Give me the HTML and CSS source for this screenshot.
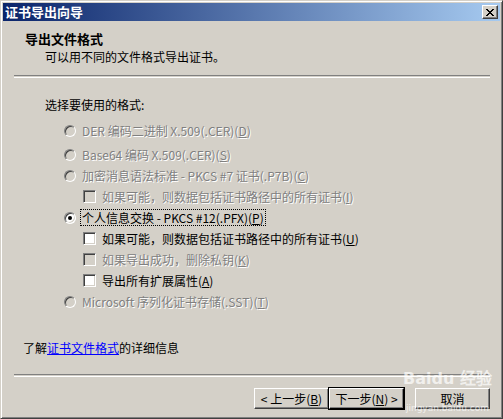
FILE: index.html
```html
<!DOCTYPE html>
<html lang="zh-CN">
<head>
  <meta charset="UTF-8">
  <title>证书导出向导</title>
  <link rel="stylesheet" href="styles.css">
</head>
<body>
  <div class="window">
    <div class="titlebar">
      <span class="title">证书导出向导</span>
      <span class="close">
        <svg width="8" height="7" viewBox="0 0 8 7">
          <path d="M0 0h2v1h1v1h2v-1h1v-1h2v1h-1v1h-1v1h-1v1h1v1h1v1h1v1h-2v-1h-1v-1h-2v1h-1v1h-2v-1h1v-1h1v-1h1v-1h-1v-1h-1v-1h-1z" fill="#000"/>
        </svg>
      </span>
    </div>

    <div class="header">
      <div class="header-title">导出文件格式</div>
      <div class="header-sub">可以用不同的文件格式导出证书。</div>
    </div>
    <div class="sep"></div>

    <div class="prompt">选择要使用的格式:</div>
    <ul class="options">
      <li class="opt first disabled"><span class="radio"></span><span class="label">DER 编码二进制 X.509(.CER)(<u>D</u>)</span></li>
      <li class="opt disabled"><span class="radio"></span><span class="label">Base64 编码 X.509(.CER)(<u>S</u>)</span></li>
      <li class="opt disabled"><span class="radio"></span><span class="label">加密消息语法标准 - PKCS #7 证书(.P7B)(<u>C</u>)</span></li>
      <li class="opt sub disabled"><span class="check"></span><span class="label">如果可能，则数据包括证书路径中的所有证书(<u>I</u>)</span></li>
      <li class="opt"><span class="radio checked"></span><span class="label focus">个人信息交换 - PKCS #12(.PFX)(<u>P</u>)</span></li>
      <li class="opt sub"><span class="check"></span><span class="label">如果可能，则数据包括证书路径中的所有证书(<u>U</u>)</span></li>
      <li class="opt sub disabled"><span class="check"></span><span class="label">如果导出成功，删除私钥(<u>K</u>)</span></li>
      <li class="opt sub"><span class="check"></span><span class="label">导出所有扩展属性(<u>A</u>)</span></li>
      <li class="opt disabled"><span class="radio"></span><span class="label">Microsoft 序列化证书存储(.SST)(<u>T</u>)</span></li>
    </ul>

    <div class="more">了解<a href="#">证书文件格式</a>的详细信息</div>
    <div class="sep bottom"></div>

    <div class="buttons">
      <span class="btn">&lt; 上一步(<u>B</u>)</span>
      <span class="btn default">下一步(<u>N</u>) &gt;</span>
      <span class="btn cancel">取消</span>
    </div>

    <div class="watermark">
      <span class="wm-logo">Bai<b>du</b> 经验</span>
      <span class="wm-url">jingyan.baidu.com</span>
    </div>
  </div>
</body>
</html>
```

FILE: styles.css
```css
body {
  margin: 0;
  font-family: "Noto Sans CJK SC", "DejaVu Sans", sans-serif;
  font-size: 12px;
  color: #000;
  background: #d4d0c8;
}
.window {
  position: relative;
  width: 503px;
  height: 419px;
  box-sizing: border-box;
  padding: 2px;
  background: #d4d0c8;
  border: 1px solid;
  border-color: #d4d0c8 #404040 #404040 #d4d0c8;
  box-shadow: inset 1px 1px #fff, inset -1px -1px #808080;
  overflow: hidden;
}
.titlebar {
  height: 18px;
  display: flex;
  align-items: center;
  justify-content: space-between;
  background: linear-gradient(to right, #0a246a, #a6caf0);
  padding: 0 2px 0 2px;
}
.title {
  color: #fff;
  font-weight: bold;
  font-size: 13px;
  line-height: 18px;
}
.close {
  width: 16px;
  height: 14px;
  box-sizing: border-box;
  display: flex;
  align-items: center;
  justify-content: center;
  background: #d4d0c8;
  border: 1px solid;
  border-color: #fff #404040 #404040 #fff;
  box-shadow: inset -1px -1px #808080;
}
.header {
  padding: 10px 0 0 22px;
}
.header-title {
  font-weight: bold;
  font-size: 13px;
  line-height: 16px;
}
.header-sub {
  margin-top: 2px;
  padding-left: 20px;
  line-height: 16px;
}
.sep {
  margin: 10px 10px 0 11px;
  height: 1px;
  border-top: 1px solid #808080;
  border-bottom: 1px solid #fff;
}
.sep.bottom {
  margin-top: 18px;
}
.prompt {
  margin-top: 19px;
  padding-left: 42px;
  line-height: 16px;
}
.options {
  list-style: none;
  margin: 7px 0 0;
  padding: 0;
}
.opt {
  height: 21px;
  display: flex;
  align-items: center;
  gap: 4px;
  padding-left: 61px;
}
.opt.first {
  margin-bottom: 3px;
}
.opt.sub {
  padding-left: 80px;
}
.label {
  padding: 0 1px;
  border: 1px dotted transparent;
  line-height: 15px;
  white-space: nowrap;
}
.label.focus {
  border-color: #000;
}
.disabled .label {
  color: #808080;
  text-shadow: 1px 1px 0 #fff;
}
.radio {
  width: 12px;
  height: 12px;
  box-sizing: border-box;
  border-radius: 50%;
  border: 1px solid;
  border-color: #808080 #fff #fff #808080;
  box-shadow: inset 1px 1px #404040, inset -1px -1px #d4d0c8;
  background: #fff;
  position: relative;
}
.disabled .radio {
  background: #d4d0c8;
}
.radio.checked::after {
  content: "";
  position: absolute;
  left: 3px;
  top: 3px;
  width: 4px;
  height: 4px;
  border-radius: 50%;
  background: #000;
}
.check {
  width: 13px;
  height: 13px;
  box-sizing: border-box;
  border: 1px solid;
  border-color: #808080 #fff #fff #808080;
  box-shadow: inset 1px 1px #404040, inset -1px -1px #d4d0c8;
  background: #fff;
}
.disabled .check {
  background: #d4d0c8;
}
.more {
  margin-top: 28px;
  padding-left: 20px;
  line-height: 16px;
}
.more a {
  color: #0000ff;
  text-decoration: underline;
}
.buttons {
  display: flex;
  justify-content: flex-end;
  margin-top: 11px;
  padding-right: 10px;
}
.btn {
  width: 75px;
  height: 21px;
  box-sizing: border-box;
  display: flex;
  align-items: center;
  justify-content: center;
  background: #d4d0c8;
  border: 1px solid;
  border-color: #fff #404040 #404040 #fff;
  box-shadow: inset -1px -1px #808080;
  line-height: 15px;
}
.btn.default {
  outline: 1px solid #000;
  outline-offset: 0;
  border-color: #fff #000 #000 #fff;
}
.btn.cancel {
  margin-left: 11px;
}
.watermark {
  position: absolute;
  left: 402px;
  top: 368px;
  display: flex;
  flex-direction: column;
  align-items: center;
  color: rgba(255, 255, 255, 0.7);
  pointer-events: none;
}
.wm-logo {
  font-family: "DejaVu Sans", sans-serif;
  font-weight: bold;
  font-size: 16px;
  line-height: 20px;
}
.wm-url {
  margin-top: 14px;
  font-family: "DejaVu Sans", sans-serif;
  font-size: 9px;
  line-height: 10px;
}
```
